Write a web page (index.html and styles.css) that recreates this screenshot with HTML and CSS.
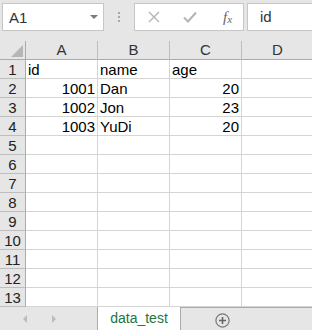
FILE: index.html
```html
<!DOCTYPE html>
<html lang="en">
  <head>
    <meta charset="UTF-8" />
    <meta name="viewport" content="width=device-width, initial-scale=1.0" />
    <title>data_test</title>
    <link rel="stylesheet" href="styles.css">
  </head>
  <body>
    <!-- Formula bar -->
    <div class="toolbar">
      <div class="name-box">
        <span>A1</span>
        <span class="caret"></span>
      </div>
      <div class="grip">
        <span></span><span></span><span></span>
      </div>
      <div class="fx-buttons">
        <svg width="12" height="12" viewBox="0 0 12 12">
          <path d="M1 1 L11 11 M11 1 L1 11" stroke="#b4b4b4" stroke-width="1.4" fill="none" />
        </svg>
        <svg width="14" height="12" viewBox="0 0 14 12">
          <path d="M1 6.5 L5 10.5 L13 1.5" stroke="#b4b4b4" stroke-width="2" fill="none" />
        </svg>
        <span class="fx"><i>f</i><sub>x</sub></span>
      </div>
      <div class="formula">id</div>
    </div>

    <!-- Grid -->
    <div class="sheet">
      <div class="corner"><span class="corner-tri"></span></div>
      <div class="col-head">A</div>
      <div class="col-head">B</div>
      <div class="col-head">C</div>
      <div class="col-head">D</div>

      <div class="row-head">1</div>
      <div class="cell">id</div>
      <div class="cell">name</div>
      <div class="cell">age</div>
      <div class="cell"></div>

      <div class="row-head">2</div>
      <div class="cell num">1001</div>
      <div class="cell">Dan</div>
      <div class="cell num">20</div>
      <div class="cell"></div>

      <div class="row-head">3</div>
      <div class="cell num">1002</div>
      <div class="cell">Jon</div>
      <div class="cell num">23</div>
      <div class="cell"></div>

      <div class="row-head">4</div>
      <div class="cell num">1003</div>
      <div class="cell">YuDi</div>
      <div class="cell num">20</div>
      <div class="cell"></div>

      <div class="row-head">5</div><div class="cell"></div><div class="cell"></div><div class="cell"></div><div class="cell"></div>
      <div class="row-head">6</div><div class="cell"></div><div class="cell"></div><div class="cell"></div><div class="cell"></div>
      <div class="row-head">7</div><div class="cell"></div><div class="cell"></div><div class="cell"></div><div class="cell"></div>
      <div class="row-head">8</div><div class="cell"></div><div class="cell"></div><div class="cell"></div><div class="cell"></div>
      <div class="row-head">9</div><div class="cell"></div><div class="cell"></div><div class="cell"></div><div class="cell"></div>
      <div class="row-head">10</div><div class="cell"></div><div class="cell"></div><div class="cell"></div><div class="cell"></div>
      <div class="row-head">11</div><div class="cell"></div><div class="cell"></div><div class="cell"></div><div class="cell"></div>
      <div class="row-head">12</div><div class="cell"></div><div class="cell"></div><div class="cell"></div><div class="cell"></div>
      <div class="row-head">13</div><div class="cell"></div><div class="cell"></div><div class="cell"></div><div class="cell"></div>
    </div>

    <!-- Sheet tabs -->
    <div class="tabbar">
      <div class="tab-nav">
        <span class="arrow-left"></span>
        <span class="arrow-right"></span>
      </div>
      <div class="tab">data_test</div>
      <div class="tab-rest">
        <svg class="add-sheet" width="15" height="15" viewBox="0 0 15 15">
          <circle cx="7.5" cy="7.5" r="6.6" stroke="#777" stroke-width="1.2" fill="none" />
          <path d="M7.5 4 V11 M4 7.5 H11" stroke="#666" stroke-width="1.6" />
        </svg>
      </div>
    </div>
  </body>
</html>
```

FILE: styles.css
```css
* {
  margin: 0;
  padding: 0;
  box-sizing: border-box;
}

body {
  font-family: "Liberation Sans", Arial, sans-serif;
  background-color: #e6e6e6;
  width: 312px;
  height: 330px;
  overflow: hidden;
}

/* Formula bar */
.toolbar {
  display: flex;
  align-items: flex-start;
  height: 41px;
  padding: 3px 0 0 2px;
  background-color: #e6e6e6;
}

.name-box {
  display: flex;
  align-items: center;
  justify-content: space-between;
  width: 102px;
  height: 28px;
  padding: 0 5px 0 6px;
  background: #fff;
  border: 1px solid #c6c6c6;
  font-size: 15px;
  color: #333;
}

.caret {
  width: 0;
  height: 0;
  border-left: 4px solid transparent;
  border-right: 4px solid transparent;
  border-top: 4px solid #7a7a7a;
}

.grip {
  display: flex;
  flex-direction: column;
  align-items: center;
  gap: 2px;
  width: 30px;
  padding-top: 9px;
}

.grip span {
  width: 2px;
  height: 2px;
  background: #a8a8a8;
}

.fx-buttons {
  display: flex;
  align-items: center;
  width: 110px;
  height: 28px;
  padding-left: 13px;
  background: #fff;
  border: 1px solid #c6c6c6;
  gap: 23px;
}

.fx {
  font-family: "Liberation Serif", serif;
  font-size: 15px;
  color: #666;
  margin-left: 3px;
}

.fx sub {
  font-size: 11px;
  font-style: italic;
  vertical-align: -1px;
}

.formula {
  flex: 1;
  height: 28px;
  margin-left: 3px;
  margin-right: -2px;
  padding-left: 12px;
  line-height: 26px;
  background: #fff;
  border: 1px solid #c6c6c6;
  font-size: 15px;
  color: #333;
}

/* Grid */
.sheet {
  display: grid;
  grid-template-columns: 26px 72px 72px 72px 72px;
  grid-auto-rows: 19px;
  background: #fff;
  font-size: 15px;
  color: #000;
}

.corner,
.col-head,
.row-head {
  background: #e6e6e6;
  color: #333;
  border-right: 1px solid #bdbdbd;
  border-bottom: 1px solid #bdbdbd;
}

.corner {
  display: flex;
  align-items: flex-end;
  justify-content: flex-end;
  padding: 0 2px 2px 0;
  border-right-color: #ababab;
  border-bottom-color: #ababab;
}

.corner-tri {
  width: 0;
  height: 0;
  border-left: 12px solid transparent;
  border-bottom: 12px solid #b6b6b6;
}

.col-head {
  text-align: center;
  line-height: 18px;
  border-bottom-color: #ababab;
}

.row-head {
  text-align: center;
  line-height: 19px;
  color: #222;
  border-right-color: #ababab;
}

.cell {
  padding: 1px 2px 0 2px;
  line-height: 18px;
  border-right: 1px solid #d4d4d4;
  border-bottom: 1px solid #d4d4d4;
  white-space: nowrap;
  overflow: hidden;
}

.cell.num {
  text-align: right;
}

/* Sheet tabs */
.tabbar {
  display: flex;
  height: 23px;
  background: #e6e6e6;
}

.tab-nav {
  display: flex;
  align-items: center;
  gap: 25px;
  width: 97px;
  padding-left: 23px;
}

.arrow-left,
.arrow-right {
  width: 0;
  height: 0;
  border-top: 4px solid transparent;
  border-bottom: 4px solid transparent;
}

.arrow-left {
  border-right: 4px solid #bcbcbc;
}

.arrow-right {
  border-left: 4px solid #bcbcbc;
}

.tab {
  width: 84px;
  padding-top: 3px;
  text-align: center;
  background: #fff;
  border-left: 1px solid #ababab;
  border-right: 1px solid #ababab;
  font-size: 14px;
  color: #217346;
}

.tab-rest {
  flex: 1;
  padding: 5px 0 0 34px;
  border-top: 1px solid #ababab;
}

.add-sheet {
  display: block;
}
```
